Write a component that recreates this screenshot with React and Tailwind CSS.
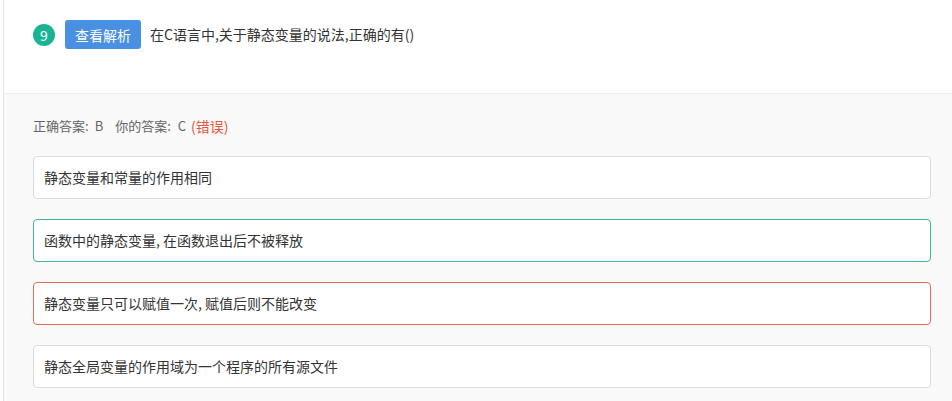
import React from "react";

const options = [
  { text: "静态变量和常量的作用相同", tone: "plain" },
  { text: "函数中的静态变量, 在函数退出后不被释放", tone: "right" },
  { text: "静态变量只可以赋值一次, 赋值后则不能改变", tone: "wrong" },
  { text: "静态全局变量的作用域为一个程序的所有源文件", tone: "plain" },
];

const borderFor = {
  plain: "border-[#dddddd]",
  right: "border-[#3cb996]",
  wrong: "border-[#e8685a]",
};

const App = () => {
  return (
    <div
      className="w-[952px] h-[401px] bg-white overflow-hidden"
      style={{ fontFamily: '"Noto Sans CJK SC", "Liberation Sans", sans-serif' }}
    >
      <div className="ml-[3px] h-full border-l border-[#e6e6e6] flex flex-col">
        {/* question header */}
        <div className="h-[94px] border-b border-[#eeeeee] pl-[29px] pt-[20px]">
          <div className="flex items-center h-[29px]">
            <span className="w-[22px] h-[22px] rounded-full bg-[#1ab394] text-white text-[14px] leading-none flex items-center justify-center">
              9
            </span>
            <button className="ml-[10px] h-[29px] px-[10px] rounded-[3px] bg-[#4a90e2] text-white text-[14px] leading-none">
              查看解析
            </button>
            <span className="ml-[9px] text-[14px] text-[#333333]">
              在C语言中,关于静态变量的说法,正确的有()
            </span>
          </div>
        </div>

        {/* answer area */}
        <div className="flex-1 bg-[#f9f9f9] pl-[29px] pr-[21px] pt-[22px]">
          <div className="flex h-[20px] leading-[20px] text-[13px] text-[#666666]">
            <span>正确答案:</span>
            <span className="ml-[6px]">B</span>
            <span className="ml-[12px]">你的答案:</span>
            <span className="ml-[7px]">C</span>
            <span className="ml-[5px] text-[#e8543f] text-[14px]">(错误)</span>
          </div>
          <div className="mt-[20px] flex flex-col gap-[20px]">
            {options.map((o) => (
              <div
                key={o.text}
                className={`h-[43px] bg-white border rounded-[4px] flex items-center pl-[10px] text-[14px] text-[#333333] whitespace-pre ${borderFor[o.tone]}`}
              >
                {o.text}
              </div>
            ))}
          </div>
        </div>
      </div>
    </div>
  );
};

export default App;
